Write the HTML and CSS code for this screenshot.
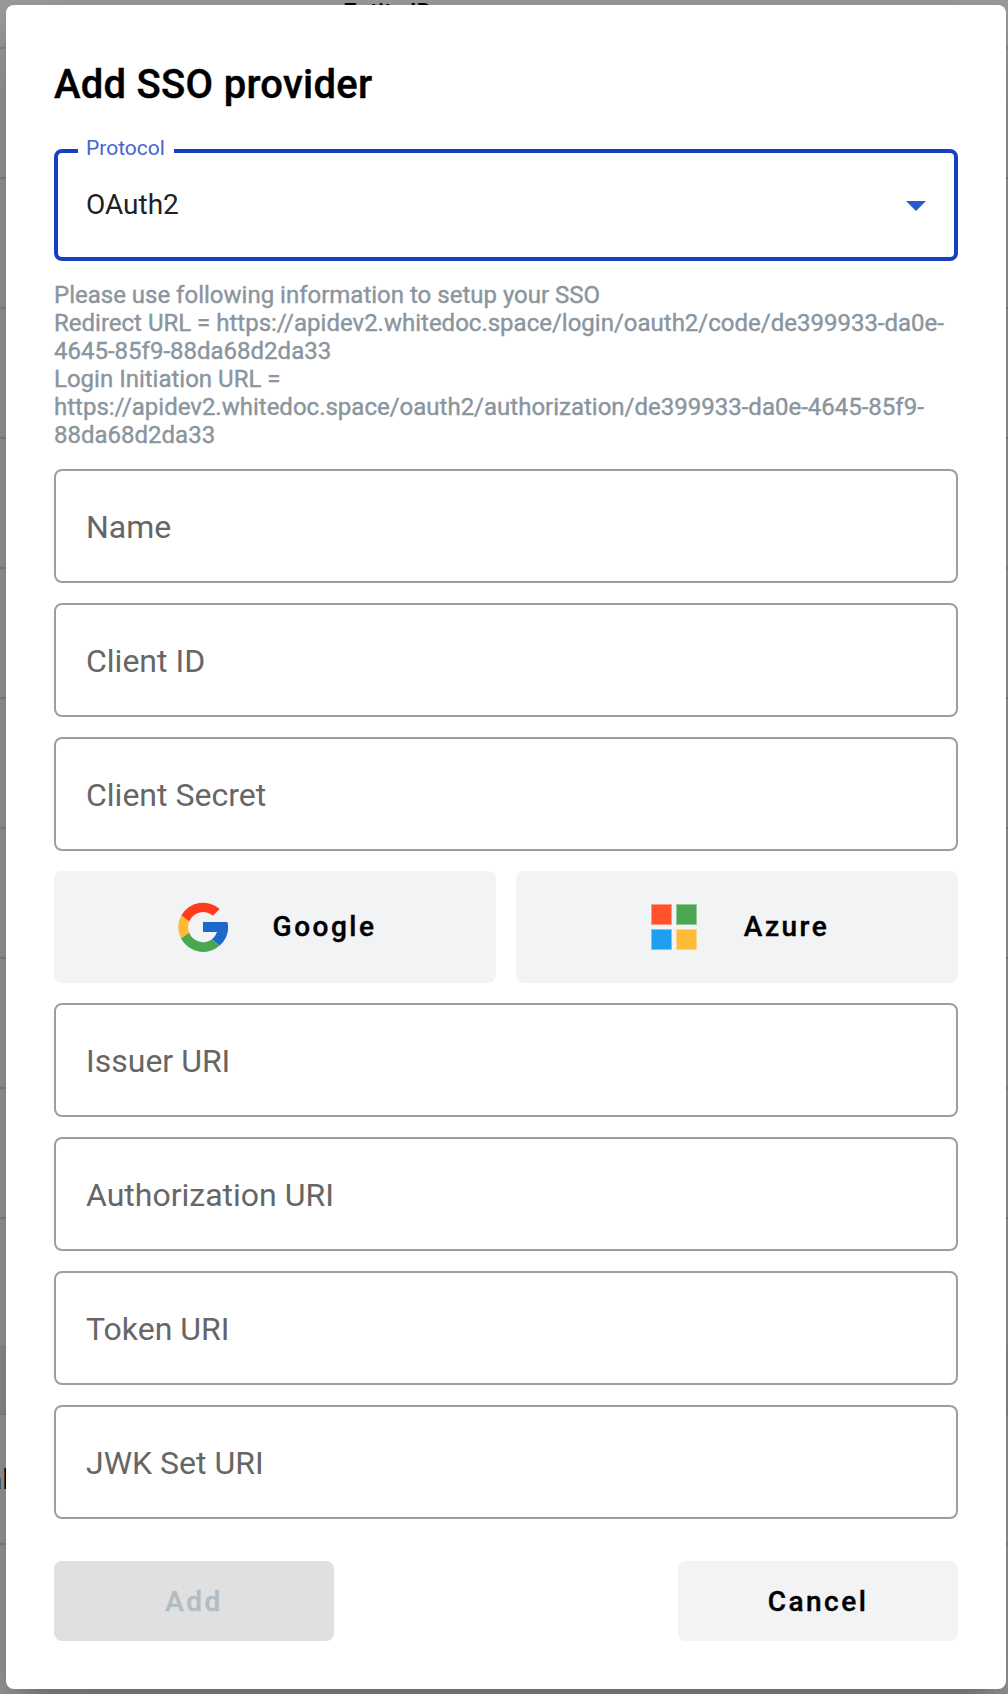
FILE: index.html
```html
<!DOCTYPE html>
<html lang="en">
<head>
<meta charset="utf-8">
<title>Add SSO provider</title>
<link rel="stylesheet" href="styles.css">
</head>
<body>
<div class="page">
  <div class="backdrop" aria-hidden="true">
    <div class="row row-head"><span class="head-text">Entity ID</span></div>
    <div class="row"></div><div class="row"></div><div class="row"></div>
    <div class="row"></div><div class="row"></div><div class="row"></div>
    <div class="row"></div><div class="row"></div><div class="row"></div>
    <div class="row row-end"></div>
    <div class="row row-band"></div>
    <div class="row"><span class="row-label">al</span></div>
    <div class="row row-last"></div>
  </div>
  <main class="dialog">
    <h1 class="title">Add SSO provider</h1>
    <div class="select">
      <span class="select-label">Protocol</span>
      <span class="select-value">OAuth2</span>
      <svg class="select-arrow" viewBox="0 0 20 10"><path d="M0 0h20L10 10z"/></svg>
    </div>
    <p class="hint">Please use following information to setup your SSO<br>Redirect URL = https://apidev2.whitedoc.space/login/oauth2/code/de399933-da0e-<br>4645-85f9-88da68d2da33<br>Login Initiation URL =<br>https://apidev2.whitedoc.space/oauth2/authorization/de399933-da0e-4645-85f9-<br>88da68d2da33</p>
    <div class="fields">
      <div class="field">Name</div>
      <div class="field">Client ID</div>
      <div class="field">Client Secret</div>
      <div class="providers">
        <button class="provider">
          <svg class="provider-icon google" viewBox="0 0 50 50">
            <path fill="#ff3d1c" d="M3.3 13.5A25 25 0 0 1 41.7 7L35 13.8A15 15 0 0 0 11.2 19.5z"/>
            <path fill="#ffba36" d="M3.3 13.5L11.2 19.5A15 15 0 0 0 11.2 30.7L3 36.6A25 25 0 0 1 3.3 13.5z"/>
            <path fill="#4aa651" d="M3 36.6L11.2 30.7A15 15 0 0 0 34 37.3L41.8 43.5A25 25 0 0 1 3 36.6z"/>
            <path fill="#1d69c9" d="M25 20H49.5A25 25 0 0 1 41.8 43.5L34 37.3A15 15 0 0 0 39 30H25z"/>
          </svg>
          <span>Google</span>
        </button>
        <button class="provider">
          <svg class="provider-icon azure" viewBox="0 0 46 46">
            <path fill="#ff522b" stroke="#ff9980" d="M.5 .5h20v20h-20z"/>
            <path fill="#4aa651" stroke="#92c997" d="M25.5 .5h20v20h-20z"/>
            <path fill="#1f9ff0" stroke="#79c5f6" d="M.5 25.5h20v20h-20z"/>
            <path fill="#ffba36" stroke="#ffd486" d="M25.5 25.5h20v20h-20z"/>
          </svg>
          <span>Azure</span>
        </button>
      </div>
      <div class="field">Issuer URI</div>
      <div class="field">Authorization URI</div>
      <div class="field">Token URI</div>
      <div class="field">JWK Set URI</div>
    </div>
    <div class="actions">
      <button class="action" disabled>Add</button>
      <button class="action">Cancel</button>
    </div>
  </main>
</div>
</body>
</html>
```
FILE: styles.css
```css
* { box-sizing: border-box; }
body { margin: 0; font-family: Roboto, "Liberation Sans", sans-serif; }
.page {
  position: relative;
  width: 1008px;
  height: 1694px;
  padding: 5px 2px 5px 6px;
  overflow: hidden;
  background: #a1a1a1;
}
.backdrop { position: absolute; inset: 0; }
.row { height: 130px; border-bottom: 2px solid #8c8c8c; }
.row-head { height: 49px; background: #9fa19f; }
.row-end { height: 126px; border-bottom: 0; }
.row-band { height: 70px; background: #979797; }
.row-last { border-bottom: 0; }
.head-text { display: block; margin: 0 0 0 343px; font-size: 24px; line-height: 24px; font-weight: 500; color: #000; }
.row-label { display: block; margin-left: -13px; padding-top: 48px; font-size: 28px; line-height: 33px; color: #000; }
.dialog {
  position: relative;
  height: 1684px;
  padding: 48px;
  border-radius: 8px;
  background: #fff;
  box-shadow: 0 22px 30px -14px rgba(0,0,0,.2), 0 48px 76px 6px rgba(0,0,0,.14), 0 18px 92px 16px rgba(0,0,0,.12);
}
.title { margin: 0 0 32px; font-size: 40px; line-height: 64px; font-weight: 500; letter-spacing: .27px; color: #000; -webkit-text-stroke: .4px; }
.select {
  position: relative;
  display: flex;
  align-items: center;
  justify-content: space-between;
  height: 112px;
  padding: 0 28px;
  border: 4px solid #173fc1;
  border-radius: 8px;
}
.select-label {
  position: absolute;
  top: -18px;
  left: 20px;
  width: 96px;
  padding-left: 8px;
  font-size: 21px;
  line-height: 26px;
  color: #4765cd;
  background: #fff;
}
.select-value { padding-bottom: 2px; font-size: 28px; color: #212121; }
.select-arrow { width: 20px; height: 10px; margin-top: 2px; fill: #3157cc; }
.hint { margin: 20px 0; font-size: 24px; line-height: 28px; color: #8a959e; white-space: nowrap; -webkit-text-stroke: .4px; }
.fields { display: flex; flex-direction: column; gap: 20px; }
.field {
  height: 114px;
  padding: 0 30px;
  border: 2px solid #9e9e9e;
  border-radius: 8px;
  font-size: 32px;
  line-height: 112px;
  color: #666;
}
.providers { display: grid; grid-template-columns: 1fr 1fr; gap: 20px; }
button { border: 0; border-radius: 8px; background: #f1f3f5; font: 500 28px/34px Roboto, "Liberation Sans", sans-serif; letter-spacing: 2.5px; color: #000; -webkit-text-stroke: .4px; }
.provider { display: flex; align-items: center; justify-content: center; height: 112px; padding: 0 0 0 4px; }
.google { width: 50px; height: 50px; margin-right: 45px; }
.azure { width: 46px; height: 46px; margin: 0 47px 0 2px; }
.actions { display: flex; justify-content: space-between; margin-top: 42px; }
.action { width: 280px; height: 80px; padding-top: 3px; }
.action:disabled { background: #e0e0e0; color: #b3bcc2; }
```
